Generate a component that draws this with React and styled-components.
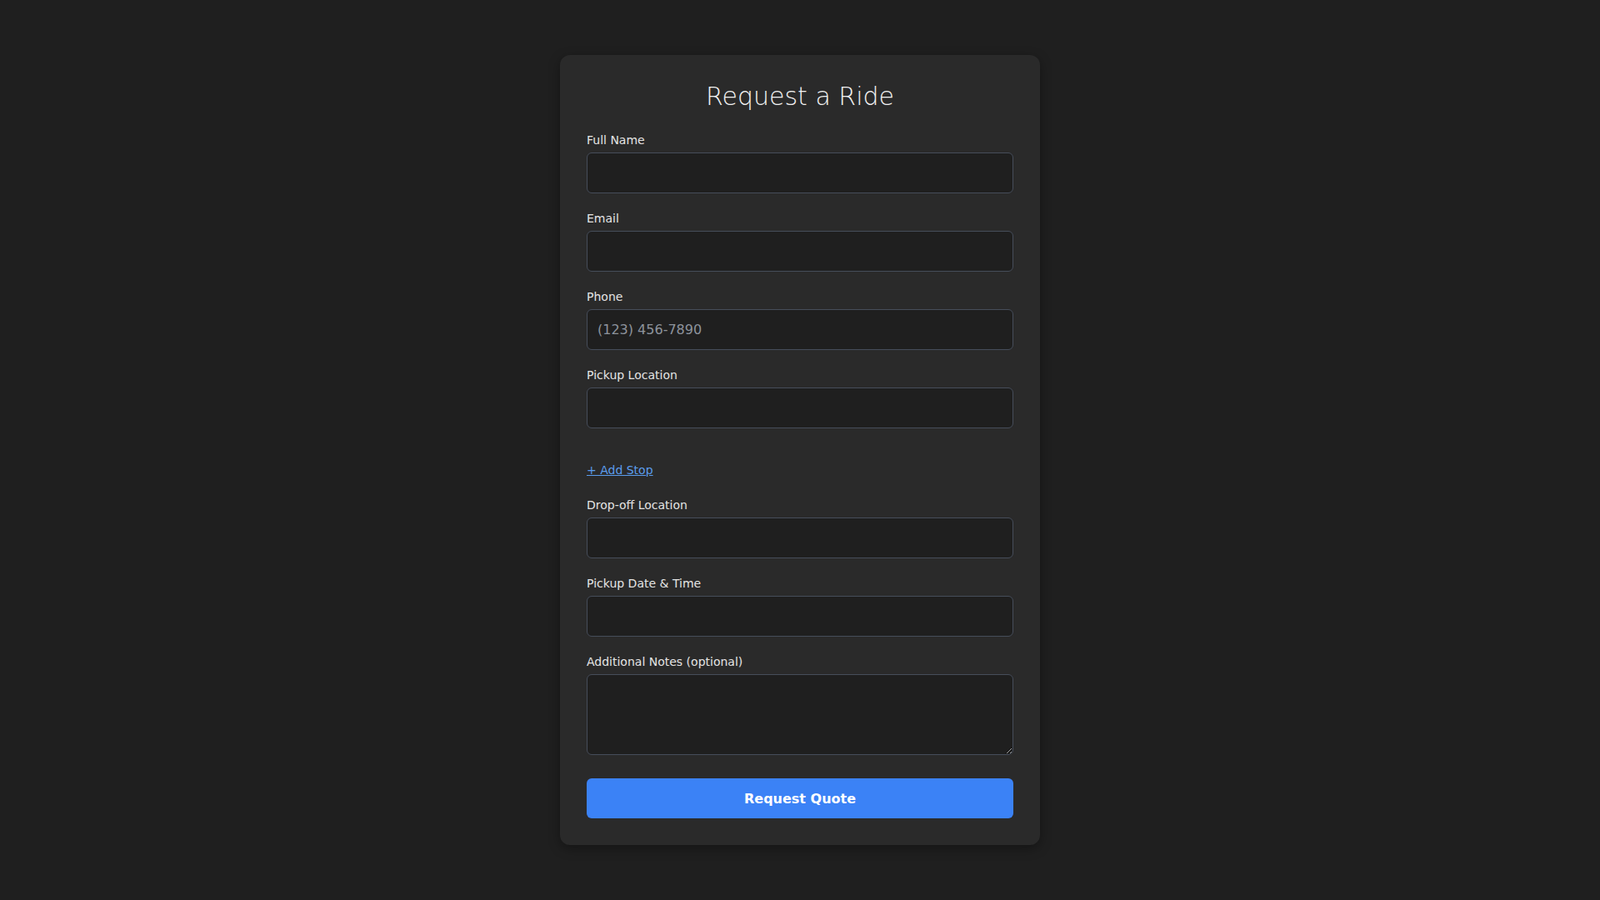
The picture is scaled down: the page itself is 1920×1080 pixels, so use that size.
import React from "react";
import styled, { createGlobalStyle } from "styled-components";

const GlobalStyle = createGlobalStyle`
	* {
		box-sizing: border-box;
	}
	body {
		margin: 0;
		background: #1f1f1f;
		font-family: "DejaVu Sans", Verdana, sans-serif;
		color: #e6e6e6;
	}
`

const Page = styled.div`
	min-height: 100vh;
	display: flex;
	align-items: center;
	justify-content: center;
`

const Card = styled.form`
	width: 576px;
	padding: 32px;
	background: #2a2a2a;
	border-radius: 12px;
	box-shadow: 0 4px 14px rgba(0, 0, 0, 0.35);
`

const Title = styled.h2`
	margin: 0 0 27px;
	text-align: center;
	font-size: 30px;
	font-weight: 200;
	line-height: normal;
	color: #f2f2f2;
`

const Field = styled.div`
	margin-bottom: ${props => props.last ? '0' : '22px'};
`

const Label = styled.label`
	display: block;
	margin-bottom: 6px;
	font-size: 14px;
	line-height: 17px;
	color: #e4e4e4;
`

const Input = styled.input`
	display: block;
	width: 100%;
	height: 49px;
	padding: 0 12px;
	background: #1f1f1f;
	border: 1px solid #464d5a;
	border-radius: 6px;
	font-family: inherit;
	font-size: 16px;
	color: #e6e6e6;
	outline: none;

	&::placeholder {
		color: #8d939c;
	}
`

const TextArea = styled.textarea`
	display: block;
	width: 100%;
	height: 97px;
	padding: 12px;
	background: #1f1f1f;
	border: 1px solid #464d5a;
	border-radius: 6px;
	font-family: inherit;
	font-size: 16px;
	color: #e6e6e6;
	outline: none;
`

const AddStop = styled.button`
	display: block;
	margin: 42px 0 25px;
	padding: 0;
	background: none;
	border: none;
	font-family: inherit;
	font-size: 14px;
	line-height: 17px;
	color: #5b9ded;
	text-decoration: underline;
	cursor: pointer;
`

const SubmitButton = styled.button`
	display: block;
	width: 100%;
	height: 48px;
	margin-top: 28px;
	background: #3b82f6;
	border: none;
	border-radius: 6px;
	font-family: inherit;
	font-size: 16px;
	font-weight: bold;
	color: #ffffff;
	cursor: pointer;
`

const FormField = ({label, placeholder, type = "text", last}) => (
	<Field last={last}>
		<Label>{label}</Label>
		<Input type={type} placeholder={placeholder} />
	</Field>
)

const App = () => {
	return (
		<Page>
			<GlobalStyle />
			<Card onSubmit={e => e.preventDefault()}>
				<Title>Request a Ride</Title>
				<FormField label="Full Name" />
				<FormField label="Email" type="email" />
				<FormField label="Phone" type="tel" placeholder="(123) 456-7890" />
				<FormField label="Pickup Location" />
				<AddStop type="button">+ Add Stop</AddStop>
				<FormField label="Drop-off Location" />
				<FormField label="Pickup Date &amp; Time" />
				<Field last>
					<Label>Additional Notes (optional)</Label>
					<TextArea />
				</Field>
				<SubmitButton type="submit">Request Quote</SubmitButton>
			</Card>
		</Page>
	)
}

export default App
